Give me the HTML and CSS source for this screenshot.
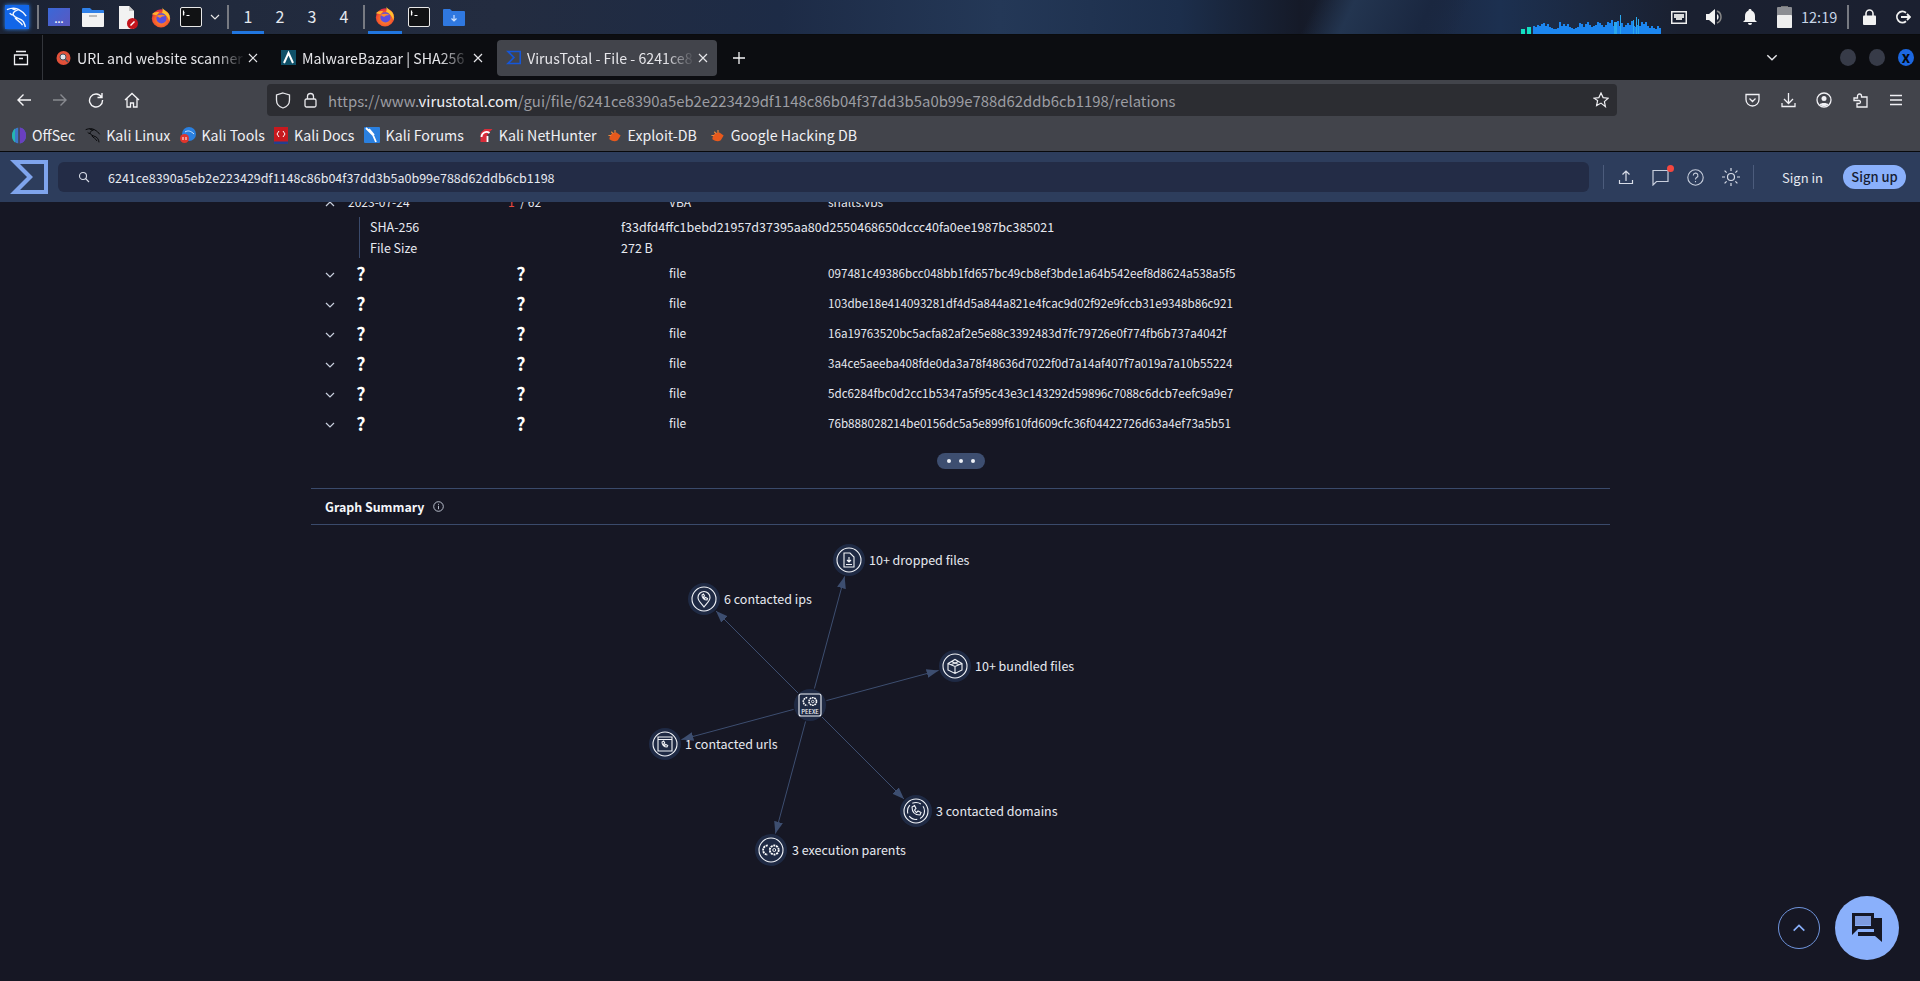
FILE: index.html
```html
<!DOCTYPE html>
<html lang="en">

<head>
    <meta charset="UTF-8">
    <title>VirusTotal - File</title>
    <link rel="stylesheet" href="styles.css">
</head>

<body>
    <svg class="defs" width="0" height="0">
        <defs>
            <radialGradient id="ffBody" cx="50%" cy="60%" r="60%">
                <stop offset="0" stop-color="#ff9a2e"/>
                <stop offset="0.7" stop-color="#f5542c"/>
                <stop offset="1" stop-color="#d9264e"/>
            </radialGradient>
            <marker id="arrow" markerUnits="userSpaceOnUse" markerWidth="13" markerHeight="10" refX="12" refY="4.5" orient="auto">
                <path d="M0 0L12 4.5L0 9Z" fill="#3d4e70"/>
            </marker>
            <symbol id="firefox" viewBox="0 0 24 24">
                <circle cx="12" cy="13.5" r="10" fill="url(#ffBody)"/>
                <path d="M13 1c1 3 5 4 7 7 2 3 2 6 1 9-1-5-4-8-8-9 1-2 1-5 0-7z" fill="#ffc02e"/>
                <path d="M2 9c2-2 5-3 8-2l-3 3z" fill="#ffb02e"/>
                <circle cx="12.500" cy="13.500" r="5.500" fill="#5a4fe0"/>
                <path d="M7 11c3-2 7-2 10 0-3 0-5 1-6 2z" fill="#ff8a2e"/>
            </symbol>
            <symbol id="terminal" viewBox="0 0 22 20">
                <rect x="0.500" y="0.500" width="21" height="19" rx="1.500" fill="#111214" stroke="#e8e8e8"/>
                <path d="M3 7h1.500M3.500 3.500v5M3 5.500h1.500M6.500 8.500h3" stroke="#fff" stroke-width="1.200" fill="none"/>
            </symbol>
            <symbol id="dragon" viewBox="0 0 24 24">
                <path d="M1 4c5-2 10-2 13 0 4 2 6 4 8 7M14 4c-4 1-7 3-6 6 2 4 8 3 11 7 1 2 2 4 2 6M8 10c-2 0-3-1-4-2M10 13c2 3 6 4 8 8M12 5l-5-2" fill="none" stroke="currentColor" stroke-width="1.500"/>
            </symbol>
            <symbol id="sigma" viewBox="0 0 38 34">
                <path fill-rule="evenodd" d="M0 0H38V34H0L17 17ZM10 4H34V30H10L23 17Z" fill="currentColor"/>
            </symbol>
            <symbol id="close" viewBox="0 0 12 12">
                <path d="M2 2l8 8M10 2l-8 8" stroke="currentColor" stroke-width="1.200" fill="none"/>
            </symbol>
            <symbol id="chev" viewBox="0 0 10 6">
                <path d="M1 1l4 4 4-4" stroke="currentColor" stroke-width="1.200" fill="none"/>
            </symbol>
            <symbol id="bug" viewBox="0 0 16 16">
                <path d="M2 12c0-5 4-8 8-7l4 3-3 5c-3 2-6 1-9-1z" fill="#e8591c"/>
                <path d="M4 4l2 2M1 8l3 0M8 2l0 3" stroke="#f08a3c" stroke-width="1.200"/>
            </symbol>
            <symbol id="gears" viewBox="0 0 20 14">
                <circle cx="13.500" cy="7" r="4.800" fill="none" stroke="#fff" stroke-width="2" stroke-dasharray="2.200 0.800"/>
                <circle cx="13.500" cy="7" r="1.600" fill="none" stroke="#fff" stroke-width="1"/>
                <path d="M6.500 2a5 5 0 0 0 0 10" fill="none" stroke="#fff" stroke-width="2" stroke-dasharray="2.200 0.800"/>
            </symbol>
        </defs>
    </svg>

    <div class="taskbar">
        <div class="tb-slot w34"><span class="kali-btn"><svg width="22" height="22"><use href="#dragon"/></svg></span></div>
        <div class="tb-sep"></div>
        <div class="tb-slot w34"><span class="app-menu">...</span></div>
        <div class="tb-slot w34">
            <svg width="22" height="20" viewBox="0 0 22 20"><path d="M0 2a1 1 0 0 1 1-1h7l2 2h11a1 1 0 0 1 1 1v2H0z" fill="#2f80e8"/><path d="M0 6h22v13a1 1 0 0 1-1 1H1a1 1 0 0 1-1-1z" fill="#f2f2f2"/><rect x="7" y="8" width="8" height="2" fill="#bbb"/></svg>
        </div>
        <div class="tb-slot w35">
            <svg width="20" height="23" viewBox="0 0 20 23"><path d="M1 0h10l5 5v18H1z" fill="#f2f2f2"/><path d="M11 0l5 5h-5z" fill="#c8c8c8"/><circle cx="14.500" cy="17.500" r="5.500" fill="#c3141c"/><path d="M12.500 19.500l4-4" stroke="#fff" stroke-width="1.500"/></svg>
        </div>
        <div class="tb-slot w32"><svg width="22" height="22"><use href="#firefox"/></svg></div>
        <div class="tb-slot w28"><svg width="22" height="20"><use href="#terminal"/></svg></div>
        <div class="tb-slot w19 tb-chev"><svg width="10" height="6"><use href="#chev"/></svg></div>
        <div class="tb-sep"></div>
        <div class="tb-ws tb-on">1</div>
        <div class="tb-ws">2</div>
        <div class="tb-ws">3</div>
        <div class="tb-ws">4</div>
        <div class="tb-sep"></div>
        <div class="tb-slot w34 tb-on"><svg width="22" height="22"><use href="#firefox"/></svg></div>
        <div class="tb-slot w34"><svg width="22" height="20"><use href="#terminal"/></svg></div>
        <div class="tb-slot w35">
            <svg width="22" height="17" viewBox="0 0 22 17"><path d="M0 1a1 1 0 0 1 1-1h6l2 2h12a1 1 0 0 1 1 1v13a1 1 0 0 1-1 1H1a1 1 0 0 1-1-1z" fill="#2f78e0"/><path d="M11 6v6M8.500 9.500l2.500 2.500 2.500-2.500" stroke="#cfe2ff" stroke-width="1.200" fill="none"/></svg>
        </div>
        <div class="tb-space"></div>
        <svg class="netgraph" width="140" height="20" viewBox="0 0 140 20">
            <rect x="0" y="15" width="4" height="5" fill="#12e0c0"/>
            <rect x="6" y="13" width="4" height="7" fill="#12e0c0"/>
            <path d="M12 20V12h2V13h2V11h2V12h2V10h2V9h2V12h2V10h2V13h2V14h2V15h2V15h2V14h2V8h2V12h2V10h2V12h2V10h2V13h2V14h2V15h2V14h2V13h2V9h2V10h2V13h2V10h2V8h2V11h2V13h2V12h2V11h2V8h2V9h2V11h2V13h2V11h2V8h2V9h2V6h2V12h2V9h2V7h2V12h2V9h2V13h2V11h2V9h2V11h2V7h2V12h2V13h2V11h2V12h2V8h2V10h2V8h2V12h2V14h2V12h2V14h2V15h2V12h2V14h2V20z" fill="#1c86f0"/>
            <path d="M93 20V8h3v12zM99 20V1h1v19zM112 20V6h1v14zM115 20V3h1v17zM117 20V5h1v15z" fill="#2aa8ee"/>
        </svg>
        <div class="tb-slot w36">
            <svg width="16" height="13" viewBox="0 0 16 13"><rect x="0.750" y="0.750" width="14.500" height="11.500" fill="none" stroke="#eee" stroke-width="1.500"/><path d="M3 3h10v4h-2v2H5V7H3z" fill="#eee" opacity="0.900"/></svg>
        </div>
        <div class="tb-slot w36">
            <svg width="18" height="18" viewBox="0 0 18 18"><path d="M0 6h3l6-5v16l-6-5H0z" fill="#f2f2f2"/><path d="M11 3a6.500 6.500 0 0 1 0 12" stroke="#888" stroke-width="1.500" fill="none"/><path d="M11 6a3.500 3.500 0 0 1 0 6z" fill="#eee"/></svg>
        </div>
        <div class="tb-slot w34">
            <svg width="14" height="16" viewBox="0 0 14 16"><path d="M7 0c1 0 1.500.5 1.500 1.500C11 2.500 12 4.500 12 7v4l2 2H0l2-2V7c0-2.500 1-4.500 3.500-5.500C5.500.5 6 0 7 0z" fill="#f2f2f2"/><path d="M5 14h4a2 2 0 0 1-4 0z" fill="#f2f2f2"/></svg>
        </div>
        <div class="tb-slot w34">
            <svg width="15" height="22" viewBox="0 0 15 22"><rect x="4" y="0" width="7" height="2" fill="#777"/><rect x="0" y="1" width="15" height="21" rx="1" fill="#8b8d92"/><rect x="0" y="9" width="15" height="13" rx="1" fill="#eeeeee"/></svg>
        </div>
        <div class="tb-time">12:19</div>
        <div class="tb-sep w16"></div>
        <div class="tb-slot w26">
            <svg width="13" height="16" viewBox="0 0 13 16"><path d="M3 7V4.500a3.500 3.500 0 0 1 7 0V7" fill="none" stroke="#f2f2f2" stroke-width="1.600"/><rect y="6.500" width="13" height="9.500" rx="1" fill="#f2f2f2"/></svg>
        </div>
        <div class="tb-slot tb-logout">
            <svg width="16" height="14" viewBox="0 0 16 14"><path d="M11 2.800a5.500 5.500 0 1 0 0 8.400" fill="none" stroke="#f2f2f2" stroke-width="1.800"/><path d="M6 7h9M12 4l3 3-3 3" fill="none" stroke="#f2f2f2" stroke-width="1.800"/></svg>
        </div>
    </div>

    <div class="tabbar">
        <div class="tab-all">
            <svg width="16" height="16" viewBox="0 0 16 16"><path d="M3 1.500h10M1.500 5h13v9.500h-13zM6 8.500h4" fill="none" stroke="#f0f0f4" stroke-width="1.300"/></svg>
        </div>
        <div class="tab">
            <svg width="14" height="14" viewBox="0 0 14 14"><circle cx="7" cy="7" r="7" fill="#e2513a"/><circle cx="6.500" cy="6" r="3" fill="#dfe6ee" stroke="#45505e"/><path d="M9 8.500l2.500 2.500" stroke="#45505e" stroke-width="1.500"/></svg>
            <span class="tab-title">URL and website scanner -</span>
            <svg class="tab-x" width="12" height="12"><use href="#close"/></svg>
        </div>
        <div class="tab">
            <svg width="15" height="15" viewBox="0 0 15 15"><rect width="15" height="15" fill="#0f5068"/><path d="M3 13L7.500 3 12 13" fill="none" stroke="#fff" stroke-width="2"/></svg>
            <span class="tab-title">MalwareBazaar | SHA256</span>
            <svg class="tab-x" width="12" height="12"><use href="#close"/></svg>
        </div>
        <div class="tab tab-active">
            <svg class="vt-fav" width="16" height="15"><use href="#sigma"/></svg>
            <span class="tab-title">VirusTotal - File - 6241ce8</span>
            <svg class="tab-x" width="12" height="12"><use href="#close"/></svg>
        </div>
        <div class="tab-new">
            <svg width="14" height="14" viewBox="0 0 14 14"><path d="M7 1v12M1 7h12" stroke="#f4f4f6" stroke-width="1.300"/></svg>
        </div>
        <div class="tab-space"></div>
        <svg class="tab-more" width="12" height="7"><use href="#chev"/></svg>
        <div class="win-btn"></div>
        <div class="win-btn"></div>
        <div class="win-btn win-close">x</div>
    </div>

    <div class="toolbar">
        <div class="tool">
            <svg width="16" height="16" viewBox="0 0 16 16"><path d="M15 8H2M7.500 2.500L2 8l5.500 5.500" fill="none" stroke="#f4f4f6" stroke-width="1.400"/></svg>
        </div>
        <div class="tool tool-dim">
            <svg width="16" height="16" viewBox="0 0 16 16"><path d="M1 8h13M8.500 2.500L14 8l-5.500 5.500" fill="none" stroke="#888a90" stroke-width="1.400"/></svg>
        </div>
        <div class="tool">
            <svg width="16" height="16" viewBox="0 0 16 16"><path d="M13.500 5A6.500 6.500 0 1 0 14.500 8M14 1v4.500H9.500" fill="none" stroke="#f4f4f6" stroke-width="1.400"/></svg>
        </div>
        <div class="tool">
            <svg width="16" height="16" viewBox="0 0 16 16"><path d="M1 8l7-6.500L15 8M3 6.500V15h3.500v-4h3v4H13V6.500" fill="none" stroke="#f4f4f6" stroke-width="1.300"/></svg>
        </div>
        <div class="urlbar">
            <svg class="url-shield" width="16" height="17" viewBox="0 0 16 17"><path d="M8 1l6.500 2v5c0 4-3 7-6.500 8-3.500-1-6.500-4-6.500-8V3z" fill="none" stroke="#e8e8ec" stroke-width="1.300"/></svg>
            <svg class="url-lock" width="13" height="16" viewBox="0 0 13 16"><path d="M3.500 7V4.500a3 3 0 0 1 6 0V7" fill="none" stroke="#e8e8ec" stroke-width="1.300"/><rect x="1" y="7" width="11" height="8" rx="1.500" fill="none" stroke="#e8e8ec" stroke-width="1.300"/></svg>
            <span class="url-text">https://www.<b>virustotal.com</b>/gui/file/6241ce8390a5eb2e223429df1148c86b04f37dd3b5a0b99e788d62ddb6cb1198/relations</span>
            <svg class="url-star" width="16" height="16" viewBox="0 0 16 16"><path d="M8 1l2.100 4.600 5 .6-3.700 3.400 1 5L8 11.100l-4.400 2.500 1-5L.9 6.200l5-.6z" fill="none" stroke="#f0f0f4" stroke-width="1.200"/></svg>
        </div>
        <div class="tool tool-first">
            <svg width="15" height="15" viewBox="0 0 15 15"><path d="M1 1.500h13v5a6.500 6.500 0 0 1-13 0zM4.500 5.500l3 3 3-3" fill="none" stroke="#f0f0f4" stroke-width="1.300"/></svg>
        </div>
        <div class="tool">
            <svg width="15" height="16" viewBox="0 0 15 16"><path d="M7.500 1v10M3 7l4.500 4.500L12 7M1 11v3.500h13V11" fill="none" stroke="#f0f0f4" stroke-width="1.300"/></svg>
        </div>
        <div class="tool">
            <svg width="16" height="16" viewBox="0 0 16 16"><circle cx="8" cy="8" r="7" fill="none" stroke="#f0f0f4" stroke-width="1.300"/><circle cx="8" cy="6.500" r="2.500" fill="#f0f0f4"/><path d="M3.500 12.500c1-2 8-2 9 0-2 2-7 2-9 0z" fill="#f0f0f4"/></svg>
        </div>
        <div class="tool">
            <svg width="15" height="16" viewBox="0 0 15 16"><path d="M1 6h3.500V4a2 2 0 0 1 4 0v1h5.500v10H4v-3.500H6a1.500 1.500 0 0 0 0-3H1z" fill="none" stroke="#f0f0f4" stroke-width="1.300"/></svg>
        </div>
        <div class="tool">
            <svg width="14" height="12" viewBox="0 0 14 12"><path d="M1 1.500h12M1 6h12M1 10.500h12" stroke="#f0f0f4" stroke-width="1.300"/></svg>
        </div>
    </div>

    <div class="bookmarks">
        <div class="bm">
            <svg width="16" height="17" viewBox="0 0 16 17"><ellipse cx="8" cy="8.500" rx="7" ry="8" fill="#3c78c8"/><path d="M8 .5c4 0 7 3.500 7 8s-3 8-7 8z" fill="#6a3fc0"/><path d="M8 0v17" stroke="#42444b" stroke-width="1.500"/><path d="M1 8.500c0-3 1-5 3-7v14c-2-2-3-4-3-7z" fill="#25b8b0"/></svg>
            <span>OffSec</span>
        </div>
        <div class="bm">
            <svg class="bm-dark" width="16" height="16"><use href="#dragon"/></svg>
            <span>Kali Linux</span>
        </div>
        <div class="bm bm-tools">
            <svg width="16" height="16" viewBox="0 0 16 16"><circle cx="9" cy="7" r="7" fill="#2a80e0"/><path d="M5 5c3-2 6-1 9 2" stroke="#cfe6ff" fill="none"/><circle cx="4.500" cy="11.500" r="4.500" fill="#e0352c"/><path d="M3 10v3M6 10v3" stroke="#fff"/></svg>
            <span>Kali Tools</span>
        </div>
        <div class="bm">
            <svg width="14" height="17" viewBox="0 0 14 17"><rect width="14" height="17" fill="#c8191e"/><rect y="14.500" width="14" height="2.500" fill="#23408e"/><path d="M5 4L3 7l2 3M9 4l2 3-2 3" fill="none" stroke="#fff"/></svg>
            <span>Kali Docs</span>
        </div>
        <div class="bm">
            <svg width="16" height="16" viewBox="0 0 16 16"><rect width="16" height="16" rx="1" fill="#2a80e0"/><path d="M2 1l7 7 3 7M5 2l5 6" stroke="#fff" stroke-width="1.800" fill="none"/></svg>
            <span>Kali Forums</span>
        </div>
        <div class="bm bm-hunter">
            <svg width="15" height="15" viewBox="0 0 15 15"><path d="M2 14V5l4-4h8L9 6v8z" fill="#d92d3a"/><path d="M3 9a5 5 0 0 1 8-4M9 14V8" stroke="#fff" stroke-width="1.800" fill="none"/></svg>
            <span>Kali NetHunter</span>
        </div>
        <div class="bm">
            <svg width="15" height="15"><use href="#bug"/></svg>
            <span>Exploit-DB</span>
        </div>
        <div class="bm bm-ghdb">
            <svg width="15" height="15"><use href="#bug"/></svg>
            <span>Google Hacking DB</span>
        </div>
    </div>

    <div class="vt-head">
        <svg class="vt-logo" width="38" height="34"><use href="#sigma"/></svg>
        <div class="vt-search">
            <svg width="12" height="12" viewBox="0 0 12 12"><circle cx="5" cy="5" r="3.500" fill="none" stroke="#d8dde8" stroke-width="1.100"/><path d="M7.500 7.500l3.500 3.500" stroke="#d8dde8" stroke-width="1.100"/></svg>
            <span>6241ce8390a5eb2e223429df1148c86b04f37dd3b5a0b99e788d62ddb6cb1198</span>
        </div>
        <div class="vt-sep"></div>
        <div class="vt-icon">
            <svg width="16" height="16" viewBox="0 0 16 16"><path d="M8 12V2M4.500 5.500L8 2l3.500 3.500M1.500 11v3.500h13V11" fill="none" stroke="#d8dde8" stroke-width="1.200"/></svg>
        </div>
        <div class="vt-icon vt-notify">
            <svg width="18" height="17" viewBox="0 0 18 17"><path d="M1 1.500h15v11H4.500L1 16z" fill="none" stroke="#c8cfdd" stroke-width="1.200"/></svg>
            <span class="vt-dot"></span>
        </div>
        <div class="vt-icon">
            <svg width="17" height="17" viewBox="0 0 17 17"><circle cx="8.500" cy="8.500" r="7.700" fill="none" stroke="#c8cfdd" stroke-width="1.100"/><path d="M6.300 6.500a2.300 2.300 0 1 1 3.300 2c-.8.500-1.100 1-1.100 2M8.500 12v1.200" fill="none" stroke="#c8cfdd" stroke-width="1.100"/></svg>
        </div>
        <div class="vt-icon">
            <svg width="20" height="20" viewBox="0 0 20 20"><circle cx="10" cy="10" r="3.500" fill="none" stroke="#d8dde8" stroke-width="1.200"/><path d="M10 1v3M10 16v3M1 10h3M16 10h3M3.600 3.600l2 2M14.400 14.400l2 2M3.600 16.400l2-2M14.400 5.600l2-2" stroke="#d8dde8" stroke-width="1.200"/></svg>
        </div>
        <div class="vt-sep vt-sep2"></div>
        <span class="vt-signin">Sign in</span>
        <span class="vt-signup">Sign up</span>
    </div>

    <div class="page">
        <div class="content">
            <div class="rel-list">
                <div class="rel-row">
                    <svg class="rel-chev rel-open" width="10" height="6"><use href="#chev"/></svg>
                    <span>2023-07-24</span>
                    <span><i class="red">1</i> / 62</span>
                    <span>VBA</span>
                    <span>shalts.vbs</span>
                </div>
                <div class="rel-detail">
                    <span>SHA-256</span><span>f33dfd4ffc1bebd21957d37395aa80d2550468650dccc40fa0ee1987bc385021</span>
                    <span>File Size</span><span>272 B</span>
                </div>
                <div class="rel-row">
                    <svg class="rel-chev" width="10" height="6"><use href="#chev"/></svg>
                    <span class="unk">?</span><span class="unk">?</span><span>file</span>
                    <span class="hash">097481c49386bcc048bb1fd657bc49cb8ef3bde1a64b542eef8d8624a538a5f5</span>
                </div>
                <div class="rel-row">
                    <svg class="rel-chev" width="10" height="6"><use href="#chev"/></svg>
                    <span class="unk">?</span><span class="unk">?</span><span>file</span>
                    <span class="hash">103dbe18e414093281df4d5a844a821e4fcac9d02f92e9fccb31e9348b86c921</span>
                </div>
                <div class="rel-row">
                    <svg class="rel-chev" width="10" height="6"><use href="#chev"/></svg>
                    <span class="unk">?</span><span class="unk">?</span><span>file</span>
                    <span class="hash">16a19763520bc5acfa82af2e5e88c3392483d7fc79726e0f774fb6b737a4042f</span>
                </div>
                <div class="rel-row">
                    <svg class="rel-chev" width="10" height="6"><use href="#chev"/></svg>
                    <span class="unk">?</span><span class="unk">?</span><span>file</span>
                    <span class="hash">3a4ce5aeeba408fde0da3a78f48636d7022f0d7a14af407f7a019a7a10b55224</span>
                </div>
                <div class="rel-row">
                    <svg class="rel-chev" width="10" height="6"><use href="#chev"/></svg>
                    <span class="unk">?</span><span class="unk">?</span><span>file</span>
                    <span class="hash">5dc6284fbc0d2cc1b5347a5f95c43e3c143292d59896c7088c6dcb7eefc9a9e7</span>
                </div>
                <div class="rel-row">
                    <svg class="rel-chev" width="10" height="6"><use href="#chev"/></svg>
                    <span class="unk">?</span><span class="unk">?</span><span>file</span>
                    <span class="hash">76b888028214be0156dc5a5e899f610fd609cfc36f04422726d63a4ef73a5b51</span>
                </div>
            </div>
            <div class="more-wrap"><span class="more-pill"><i></i><i></i><i></i></span></div>
            <div class="section-head">
                <span>Graph Summary</span>
                <svg width="11" height="11" viewBox="0 0 11 11"><circle cx="5.500" cy="5.500" r="4.800" fill="none" stroke="#c8cfdd" stroke-width="0.900"/><path d="M5.500 4.800v3.400M5.500 2.800v1" stroke="#c8cfdd" stroke-width="0.900"/></svg>
            </div>
            <svg class="graph" width="1299" height="380" viewBox="0 0 1299 380">
                <g class="edge">
                    <line x1="503.400" y1="163.600" x2="533.600" y2="51.400" marker-end="url(#arrow)"/>
                    <line x1="487" y1="168" x2="405" y2="86" marker-end="url(#arrow)"/>
                    <line x1="515.400" y1="175.600" x2="627.600" y2="145.400" marker-end="url(#arrow)"/>
                    <line x1="482.600" y1="184.400" x2="370.400" y2="214.600" marker-end="url(#arrow)"/>
                    <line x1="511" y1="192" x2="593" y2="274" marker-end="url(#arrow)"/>
                    <line x1="494.600" y1="196.400" x2="464.400" y2="308.600" marker-end="url(#arrow)"/>
                </g>

                <g transform="translate(499 180)">
                    <circle class="node-out" r="16"/>
                    <rect class="node-line" x="-11" y="-11" width="22" height="22" rx="2"/>
                    <use href="#gears" x="-8" y="-9" width="16" height="11"/>
                    <text class="node-tiny" y="8.500" text-anchor="middle">PEEXE</text>
                </g>
                <g transform="translate(538 35)">
                    <circle class="node-out" r="16"/><circle class="node-line" r="12"/>
                    <path class="node-line" d="M-5-7h6l4 4V7h-10zM-3 4.500h6M0-3V2M-2 0l2 2 2-2"/>
                </g>
                <text class="node-label" x="558" y="40">10+ dropped files</text>
                <g transform="translate(393 74)">
                    <circle class="node-out" r="16"/><circle class="node-line" r="12"/>
                    <path class="node-line" d="M0 8c-3-4-6-6-6-9.500a6 6 0 0 1 12 0C6 2 3 4 0 8zM-2-4c0 3 2 5 5 5l.5-1.500-2-1-1 1c-.5-.5-1-1-1-1.500l1-1-1-2z"/>
                </g>
                <text class="node-label" x="413" y="79">6 contacted ips</text>
                <g transform="translate(644 141)">
                    <circle class="node-out" r="16"/><circle class="node-line" r="12"/>
                    <path class="node-line" d="M-7-2.500l7-4 7 4v6.500l-7 3.500-7-3.500zM-7-2.500l7 3 7-3M0 .5V7.500M-3.500-4.500l7 3M3.500-4.500l-7 3"/>
                </g>
                <text class="node-label" x="664" y="146">10+ bundled files</text>
                <g transform="translate(354 219)">
                    <circle class="node-out" r="16"/><circle class="node-line" r="12"/>
                    <path class="node-line" d="M-7-7H7V7H-7zM-7-4.500H7M-3-2c0 3 2 5 5 5l.7-1.500-2-1-1 1c-.5-.5-1-1-1-1.500l1-1-1-2z"/>
                </g>
                <text class="node-label" x="374" y="224">1 contacted urls</text>
                <g transform="translate(605 286)">
                    <circle class="node-out" r="16"/><circle class="node-line" r="12"/>
                    <circle class="node-line" r="8.500" stroke-dasharray="9 3"/>
                    <path class="node-line" d="M-4-4c0 5 3 8 8 8l1-2.500-3-1.500-1.500 1.500c-1-.5-1.500-1.500-2-2.500l1.500-1.500-1.500-3z"/>
                </g>
                <text class="node-label" x="625" y="291">3 contacted domains</text>
                <g transform="translate(460 325)">
                    <circle class="node-out" r="16"/><circle class="node-line" r="12"/>
                    <use href="#gears" x="-9.500" y="-6.500" width="19" height="13"/>
                </g>
                <text class="node-label" x="481" y="330">3 execution parents</text>
            </svg>
        </div>
        <div class="float-btns">
            <div class="to-top">
                <svg class="to-top-chev" width="14" height="8"><use href="#chev"/></svg>
            </div>
            <div class="chat">
                <svg width="32" height="32" viewBox="0 0 32 32"><path d="M1 1h22v16H7l-6 6z" fill="#161724"/><path d="M4 4h16v10H4z" fill="#8ab0fb"/><path d="M4 4h16v9H4z" fill="#7d9ade"/><path d="M23 6h8v24l-7-6H7v-4h16z" fill="#161724"/></svg>
            </div>
        </div>
    </div>
</body>

</html>
```

FILE: styles.css
```css
* {
    margin: 0;
    padding: 0;
    box-sizing: border-box;
}

html,
body {
    height: 981px;
    overflow: hidden;
}

body {
    display: flex;
    flex-direction: column;
    background: #161724;
    font-family: "Noto Sans CJK SC", "Noto Sans", sans-serif;
    color: #e6e9f0;
}

.defs {
    position: absolute;
}

/* desktop panel */
.taskbar {
    height: 34px;
    display: flex;
    flex: none;
    background:
        linear-gradient(115deg, transparent 68%, #233550 70%, #1a2740 74%, transparent 76%),
        linear-gradient(90deg, #1b2233 0, #212a3d 230px, #232c40 500px, #1d2b46 780px, #243857 1000px, #1c2e4b 1180px, #151a28 1300px, #1b2740 1420px, #1c3050 1500px, #1a2030 1680px, #1b2030 1920px);
}

.tb-slot {
    display: flex;
    align-items: center;
    justify-content: center;
    height: 34px;
    flex: none;
}

.w19 { width: 19px; }
.w26 { width: 26px; }
.w28 { width: 28px; }
.w32 { width: 32px; }
.w34 { width: 34px; }
.w35 { width: 35px; }
.w36 { width: 36px; }

.tb-sep {
    width: 8px;
    flex: none;
    position: relative;
}

.tb-sep::after {
    content: "";
    display: block;
    width: 2px;
    height: 24px;
    margin: 5px auto 0;
    background: #777a82;
}

.w16 {
    width: 16px;
}

.kali-btn {
    width: 24px;
    height: 24px;
    display: flex;
    align-items: center;
    justify-content: center;
    background: #1266e8;
    box-shadow: 0 0 4px #2f8cff;
    color: #f4f8ff;
}

.app-menu {
    width: 22px;
    height: 18px;
    background: linear-gradient(135deg, #3a68d8, #5a58c0);
    color: #fff;
    font-size: 9px;
    line-height: 24px;
    text-align: center;
    font-weight: 700;
}

.tb-chev {
    color: #e8e8e8;
}

.tb-ws {
    width: 32px;
    height: 34px;
    flex: none;
    text-align: center;
    font-size: 16px;
    line-height: 33px;
    color: #e4e8ee;
}

.tb-on {
    border-bottom: 3px solid #2176e0;
}

.tb-space {
    flex: 1;
}

.netgraph {
    align-self: flex-end;
    flex: none;
}

.tb-time {
    width: 39px;
    font-size: 14.500px;
    line-height: 33px;
    color: #c6d4e6;
    flex: none;
}

.tb-logout {
    width: 38px;
    justify-content: flex-end;
    padding-right: 9px;
}

/* browser tabs */
.tabbar {
    height: 46px;
    border-top: 1px solid #0a0b0d;
    display: flex;
    align-items: center;
    flex: none;
    background: #0c0d11;
}

.tab-all {
    width: 43px;
    height: 45px;
    margin-right: -1px;
    border-right: 1px solid #33353b;
    display: flex;
    align-items: center;
    justify-content: center;
    flex: none;
}

.tab {
    width: 220px;
    height: 36px;
    margin-left: 5px;
    padding-left: 9px;
    display: flex;
    align-items: center;
    flex: none;
    border-radius: 4px;
    position: relative;
    font-size: 14.200px;
    color: #e6e6ea;
}

.tab > svg:first-child {
    flex: none;
    width: 15px;
}

.tab-title {
    width: 168px;
    margin-left: 6px;
    overflow: hidden;
    white-space: nowrap;
    -webkit-mask-image: linear-gradient(90deg, #000 82%, transparent 100%);
    mask-image: linear-gradient(90deg, #000 82%, transparent 100%);
}

.tab-x {
    position: absolute;
    left: 200px;
    top: 12px;
    color: #e6e6ea;
}

.tab-active {
    background: #42444b;
}

.vt-fav {
    color: #1556d8;
}

.tab-new {
    width: 44px;
    display: flex;
    justify-content: center;
    flex: none;
}

.tab-space {
    flex: 1;
}

.tab-more {
    color: #e6e6ea;
    margin-right: 62px;
    flex: none;
}

.win-btn {
    width: 16px;
    height: 17px;
    border-radius: 50%;
    background: #373b48;
    margin-right: 13px;
    flex: none;
    text-align: center;
    font-size: 15px;
    font-weight: 700;
    line-height: 15px;
}

.win-close {
    background: #1c67e0;
    color: #05070c;
    margin-right: 6px;
}

/* url bar */
.toolbar {
    height: 40px;
    padding: 4px 6px;
    display: flex;
    align-items: center;
    flex: none;
    background: #42444b;
}

.tool {
    width: 36px;
    height: 32px;
    display: flex;
    align-items: center;
    justify-content: center;
    flex: none;
}

.tool-first {
    margin-left: 117px;
}

.urlbar {
    margin-left: 117px;
    height: 32px;
    flex: 1;
    display: flex;
    align-items: center;
    background: #2c2d32;
    border-radius: 4px;
    font-size: 14.880px;
    padding-left: 8px;
    color: #9c9da3;
    white-space: nowrap;
}

.url-lock {
    margin-left: 13px;
    flex: none;
}

.url-text {
    margin-left: 11px;
    flex: 1;
}

.url-text b {
    font-weight: 400;
    color: #f0f0f4;
}

.url-star {
    margin-right: 8px;
    flex: none;
}

.bookmarks {
    height: 32px;
    padding: 0 0 1px 11px;
    border-bottom: 1px solid #08090b;
    display: flex;
    align-items: center;
    gap: 10px;
    flex: none;
    background: #42444b;
    font-size: 14.200px;
    color: #f0f0f4;
}

.bm {
    display: flex;
    align-items: center;
    gap: 5px;
}

.bm svg {
    width: 16px;
    flex: none;
}

.bm-dark {
    color: #08090b;
}

.bm-tools {
    margin-right: -2px;
}

.bm-hunter {
    margin-left: 4px;
}

.bm-ghdb {
    margin-left: 3px;
}

/* site header */
.vt-head {
    height: 50px;
    padding-left: 10px;
    display: flex;
    align-items: center;
    flex: none;
    background: #2d3d5c;
    position: relative;
    z-index: 2;
}

.vt-logo {
    color: #7fa4ec;
    flex: none;
}

.vt-search {
    margin-left: 10px;
    height: 30px;
    flex: 1;
    display: flex;
    align-items: center;
    padding-left: 20px;
    background: #232c46;
    border-radius: 6px;
    font-size: 12.530px;
    color: #e6e9f0;
}

.vt-search span {
    margin-left: 18px;
}

.vt-sep {
    width: 1px;
    height: 24px;
    margin-left: 14px;
    margin-right: 4px;
    background: #4c5c7c;
    flex: none;
}

.vt-sep2 {
    margin-left: 5px;
    margin-right: 0;
}

.vt-icon {
    width: 35px;
    height: 30px;
    display: flex;
    align-items: center;
    justify-content: center;
    position: relative;
    flex: none;
}

.vt-dot {
    position: absolute;
    left: 24px;
    top: 3px;
    width: 7px;
    height: 7px;
    border-radius: 50%;
    background: #f5473f;
}

.vt-signin {
    margin-left: 28px;
    font-size: 13px;
    width: 61px;
    flex: none;
}

.vt-signup {
    width: 63px;
    height: 24px;
    margin-right: 14px;
    border-radius: 12px;
    background: #8ab0fb;
    color: #161d33;
    font-size: 13px;
    font-weight: 500;
    line-height: 24px;
    text-align: center;
    flex: none;
}

/* page body */
.page {
    flex: 1;
    position: relative;
    overflow: hidden;
}

.content {
    width: 1299px;
    margin-left: 311px;
    font-size: 12px;
}

.rel-list {
    margin-top: -15px;
}

.rel-row {
    height: 30px;
    display: grid;
    grid-template-columns: 37px 160px 161px 159px 1fr;
    align-items: center;
    line-height: 18px;
}

.rel-chev {
    margin-left: 14px;
    margin-top: 3px;
    color: #c8cfdd;
}

.rel-open {
    transform: rotate(180deg);
}

.hash {
    font-size: 11.650px;
}

.unk {
    width: 26px;
    text-align: center;
    font-size: 18px;
    font-weight: 700;
    color: #fff;
}

.red {
    color: #e8483f;
    font-style: normal;
    margin-right: 3px;
}

.rel-detail {
    height: 41px;
    margin-left: 48px;
    padding-left: 10px;
    border-left: 1px solid #3a4a6b;
    display: grid;
    grid-template-columns: 251px 1fr;
    grid-auto-rows: 20.500px;
    align-items: center;
    font-size: 12.500px;
    line-height: 18px;
}

.more-wrap {
    height: 50px;
    padding-top: 15px;
    display: flex;
    justify-content: center;
}

.more-pill {
    width: 48px;
    height: 16px;
    border-radius: 8px;
    background: #3d4e70;
    display: flex;
    align-items: center;
    justify-content: center;
    gap: 8px;
}

.more-pill i {
    width: 4px;
    height: 4px;
    border-radius: 50%;
    background: #eef1f6;
}

.section-head {
    height: 37px;
    padding-left: 14px;
    border-top: 1px solid #3a4a6b;
    border-bottom: 1px solid #3a4a6b;
    display: flex;
    align-items: center;
    gap: 9px;
    font-size: 12.400px;
    font-weight: 700;
    color: #f4f6fa;
}

.graph {
    display: block;
}

.edge line {
    stroke: #3d4e70;
    stroke-width: 1;
}

.node-out {
    fill: #1f2a44;
}

.node-line {
    fill: none;
    stroke: #f2f4f8;
    stroke-width: 1.100;
}

.node-label {
    font-size: 12.500px;
    fill: #e6e9f0;
}

.node-tiny {
    font-size: 5.800px;
    font-weight: 500;
    fill: #f2f4f8;
}

/* bottom right buttons */
.float-btns {
    position: absolute;
    right: 21px;
    bottom: 21px;
    display: flex;
    align-items: center;
    gap: 15px;
}

.to-top {
    width: 42px;
    height: 42px;
    border: 1px solid #6f94dc;
    border-radius: 50%;
    display: flex;
    align-items: center;
    justify-content: center;
    color: #8ab0fb;
}

.to-top-chev {
    transform: rotate(180deg);
}

.chat {
    width: 64px;
    height: 64px;
    border-radius: 50%;
    background: #8ab0fb;
    display: flex;
    align-items: center;
    justify-content: center;
}
```
